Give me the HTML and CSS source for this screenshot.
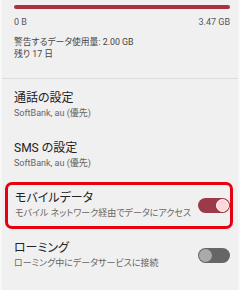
FILE: index.html
```html
<!DOCTYPE html>
<html lang="ja">
<head>
  <meta charset="UTF-8" />
  <meta name="viewport" content="width=device-width, initial-scale=1.0"/>
  <title>モバイル ネットワーク</title>
  <link rel="stylesheet" href="styles.css">
</head>
<body>
  <div class="screen">
    <div class="usage">
      <div class="bar"></div>
      <div class="bar-labels">
        <span>0 B</span>
        <span>3.47 GB</span>
      </div>
      <div class="usage-info">
        <div>警告するデータ使用量: 2.00 GB</div>
        <div>残り 17 日</div>
      </div>
    </div>

    <div class="item">
      <div class="title">通話の設定</div>
      <div class="sub">SoftBank, au (優先)</div>
    </div>

    <div class="item">
      <div class="title">SMS の設定</div>
      <div class="sub">SoftBank, au (優先)</div>
    </div>

    <div class="item toggle-row highlight">
      <div class="text">
        <div class="title">モバイルデータ</div>
        <div class="sub">モバイル ネットワーク経由でデータにアクセス</div>
      </div>
      <div class="switch on"><span class="knob"></span></div>
    </div>

    <div class="item toggle-row">
      <div class="text">
        <div class="title">ローミング</div>
        <div class="sub">ローミング中にデータサービスに接続</div>
      </div>
      <div class="switch"><span class="knob"></span></div>
    </div>
  </div>
</body>
</html>
```

FILE: styles.css
```css
body {
  margin: 0;
  font-family: Roboto, "Noto Sans CJK JP", sans-serif;
  font-feature-settings: "palt";
  background-color: #f0f0f0;
}

.screen {
  width: 240px;
  height: 290px;
  box-sizing: border-box;
  border-left: 2px solid #f7f7f7;
  border-right: 2px solid #f7f7f7;
  overflow: hidden;
}

.usage {
  padding: 5px 8px 0 12px;
  height: 73px;
  border-bottom: 1px solid #dcdcdc;
}

.bar {
  height: 4px;
  background-color: #a8323f;
  border-radius: 2px;
}

.bar-labels {
  display: flex;
  justify-content: space-between;
  font-size: 9px;
  color: #555;
  margin-top: 8px;
}

.usage-info {
  margin-top: 9px;
  font-size: 8.8px;
  line-height: 12px;
  color: #444;
}

.item {
  padding: 3px 8px 0 12px;
  height: 50px;
  box-sizing: border-box;
  display: flex;
  flex-direction: column;
  justify-content: center;
}

.title {
  font-size: 12px;
  line-height: 16px;
  color: #222;
  white-space: nowrap;
}

.sub {
  font-size: 9px;
  line-height: 15px;
  color: #666;
  white-space: nowrap;
}

.toggle-row {
  flex-direction: row;
  align-items: center;
  justify-content: space-between;
}

.highlight {
  margin: 3px 5px 0 3px;
  padding: 0 0 0 7px;
  height: 47px;
  border: 3px solid #e60012;
  border-radius: 7px;
}

.switch {
  width: 32px;
  height: 15px;
  border-radius: 8px;
  background-color: #666;
  position: relative;
  flex-shrink: 0;
}

.switch .knob {
  position: absolute;
  top: 1px;
  left: 1px;
  width: 13px;
  height: 13px;
  border-radius: 50%;
  background-color: #aaa;
}

.switch.on {
  background-color: #9b3a48;
}

.switch.on .knob {
  left: auto;
  right: 1px;
  width: 11px;
  height: 11px;
  background-color: #ffd6da;
  border: 1px solid #fff;
}
```
